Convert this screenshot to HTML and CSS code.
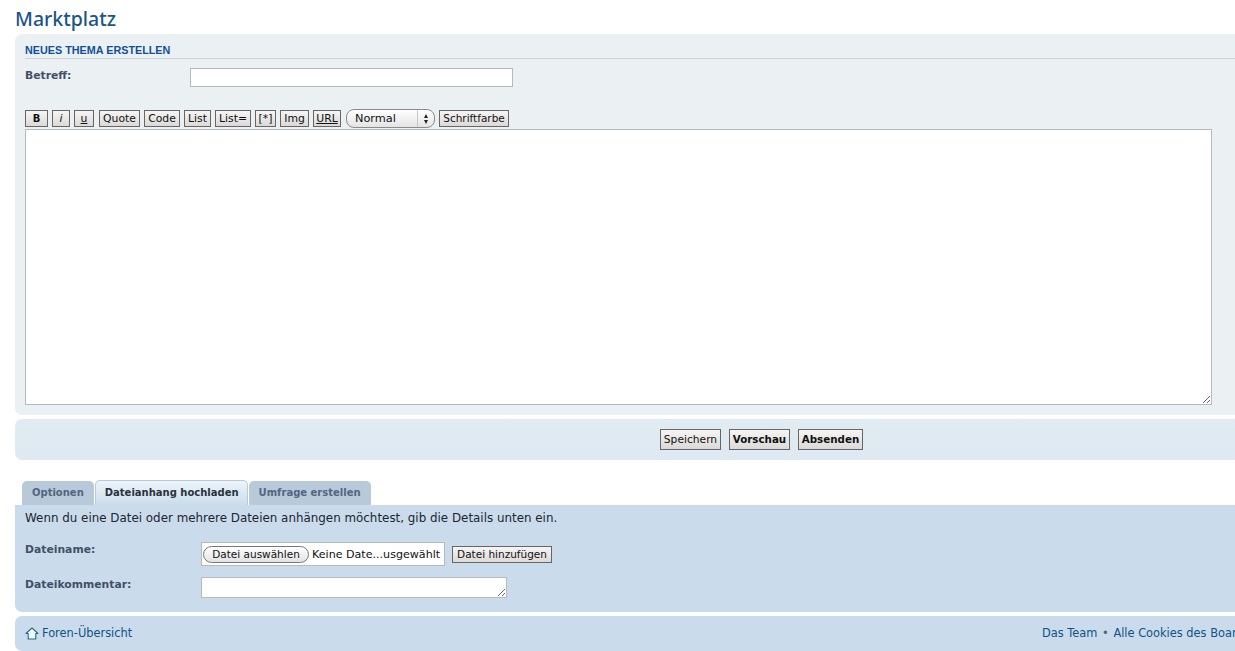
FILE: index.html
```html
<!DOCTYPE html>
<html lang="de">
<head>
<meta charset="utf-8">
<title>Marktplatz</title>
<link rel="stylesheet" href="styles.css">
</head>
<body>
<div class="wrap">
  <h2 class="title">Marktplatz</h2>
  <section class="panel post">
    <h3 class="heading">NEUES THEMA ERSTELLEN</h3>
    <div class="subject-row">
      <label class="label subject-label">Betreff:</label>
      <input class="field subject" type="text">
    </div>
    <div class="toolbar">
      <button class="btn w-b bold-b">B</button>
      <button class="btn w-i ital">i</button>
      <button class="btn w-u und">u</button>
      <button class="btn w-quote">Quote</button>
      <button class="btn w-code">Code</button>
      <button class="btn w-list">List</button>
      <button class="btn w-listeq">List=</button>
      <button class="btn w-star">[*]</button>
      <button class="btn w-img">Img</button>
      <button class="btn w-url und">URL</button>
      <div class="select"><span>Normal</span><span class="arrows"><i class="up"></i><i class="down"></i></span></div>
      <button class="btn colour">Schriftfarbe</button>
    </div>
    <textarea class="field editor"></textarea>
  </section>
  <section class="panel actions">
    <button class="btn big">Speichern</button>
    <button class="btn big strong">Vorschau</button>
    <button class="btn big strong">Absenden</button>
  </section>
  <nav class="tabs">
    <span class="tab">Optionen</span>
    <span class="tab active">Dateianhang hochladen</span>
    <span class="tab">Umfrage erstellen</span>
  </nav>
  <section class="panel attach">
    <p class="intro">Wenn du eine Datei oder mehrere Dateien anhängen möchtest, gib die Details unten ein.</p>
    <div class="attach-row">
      <label class="label attach-label">Dateiname:</label>
      <div class="file">
        <span class="file-btn">Datei auswählen</span>
        <span class="file-text">Keine Date...usgewählt</span>
      </div>
      <button class="btn add">Datei hinzufügen</button>
    </div>
    <div class="attach-row comment-row">
      <label class="label attach-label">Dateikommentar:</label>
      <textarea class="field comment"></textarea>
    </div>
  </section>
  <footer class="panel foot">
    <a class="home">
      <svg class="home-icon" viewBox="0 0 14 13" width="14" height="13"><path d="M7 1 L13 6.5 H10.8 V12 H3.2 V6.5 H1 Z" fill="#f4f8fb" stroke="#1a6f8c" stroke-width="1.1" stroke-linejoin="round"/></svg>
      Foren-Übersicht
    </a>
    <span class="foot-right">Das Team <b class="dot">•</b> Alle Cookies des Boards löschen</span>
  </footer>
</div>
</body>
</html>
```

FILE: styles.css
```css
html, body { margin: 0; padding: 0; background: #fff; overflow: hidden; width: 1235px; height: 651px; }
body { font-family: "DejaVu Sans", Verdana, sans-serif; color: #28313f; }
.wrap { width: 1300px; margin-left: 15px; }
.title { margin: 0; height: 34px; padding-top: 7px; box-sizing: border-box; font: 500 19.5px/24px "Noto Sans", "Open Sans", sans-serif; color: #1b5586; }
.panel { border-radius: 7px 0 0 7px; box-sizing: border-box; }
.post { height: 381px; background: #ebf0f3; padding: 10px 0 0 10px; }
.heading { margin: 0; height: 15px; font: 700 10.8px/12px "Liberation Sans", Arial, sans-serif; color: #115098; border-bottom: 1px solid #ccd2d6; box-sizing: border-box; }
.subject-row { display: flex; height: 42px; padding-top: 9px; box-sizing: border-box; }
.label { font-size: 10.8px; font-weight: 700; color: #425067; line-height: 15px; }
.subject-label { width: 165px; }
.field { background: #fff; border: 1px solid #b4bac0; box-sizing: border-box; margin: 0; display: block; border-radius: 0; outline: 0; }
.subject { width: 323px; height: 19px; }
.toolbar { display: flex; align-items: center; height: 19px; margin-top: 8px; gap: 4px; }
.btn { font: 400 10.8px/13px "DejaVu Sans", Verdana, sans-serif; color: #111; height: 17px; padding: 0; margin: 0; box-sizing: border-box; border: 1px solid #666; border-radius: 0; background: linear-gradient(#f6f5f4, #dcdad8); white-space: nowrap; }
.w-b { width: 23px; }
.w-i { width: 18px; }
.w-u { width: 20px; margin-right: 1px; }
.w-quote { width: 41px; }
.w-code { width: 36px; }
.w-list { width: 27px; }
.w-listeq { width: 36px; }
.w-star { width: 21px; }
.w-img { width: 29px; }
.w-url { width: 28px; }
.bold-b { font-weight: 700; font-size: 10px; }
.ital { font-style: italic; }
.und { text-decoration: underline; }
.colour { width: 70px; font-size: 10.5px; }
.select { width: 89px; height: 19px; margin-left: 1px; box-sizing: border-box; border: 1px solid #8b8b8b; border-radius: 8px; background: linear-gradient(#fff, #e4e4e4); display: flex; justify-content: space-between; align-items: center; padding-left: 8px; font-size: 11.3px; color: #111; }
.arrows { width: 16px; height: 100%; border-left: 1px solid #c8c8c8; display: flex; flex-direction: column; align-items: center; justify-content: center; gap: 2px; }
.up, .down { width: 0; height: 0; border-left: 2.5px solid transparent; border-right: 2.5px solid transparent; }
.up { border-bottom: 4px solid #222; }
.down { border-top: 4px solid #222; }
.editor { width: 1187px; height: 276px; margin-top: 1px; resize: both; }
.actions { height: 41px; margin-top: 4px; background: linear-gradient(#e1ebf2, #dfe9f1); display: flex; align-items: center; gap: 8px; padding: 0 0 0 645px; }
.big { height: 21px; font-size: 10.7px; width: 61px; }
.strong { font-weight: 700; font-size: 10.3px; }
.strong:last-child { width: 65px; }
.tabs { display: flex; align-items: flex-end; height: 45px; padding-left: 7px; gap: 1px; }
.tab { height: 24px; box-sizing: border-box; padding: 0 10px; background: #b8cad9; border-radius: 5px 5px 0 0; font-size: 10px; font-weight: 700; line-height: 23px; color: #536482; }
.active { height: 25px; padding: 0 8px 0 9px; background: linear-gradient(#eef5fa, #cadceb); border: 1px solid #b5cadb; border-bottom: 0; color: #28313f; line-height: 24px; }
.attach { height: 107px; background: #cadceb; padding: 5px 0 0 10px; border-top-left-radius: 0; }
.intro { margin: 0; font-size: 11.9px; line-height: 16px; color: #1c2530; }
.attach-row { display: flex; align-items: flex-start; }
.intro + .attach-row { margin-top: 16px; }
.attach-label { width: 176px; line-height: 15px; }
.file { width: 244px; height: 24px; box-sizing: border-box; background: #fff; border: 1px solid #b4bac0; display: flex; align-items: center; padding-left: 1px; font-size: 10.5px; color: #111; }
.file-btn { height: 17px; line-height: 15px; box-sizing: border-box; padding: 0 7px; border: 1px solid #777; border-radius: 9px; background: linear-gradient(#fff, #e2e2e2); width: 106px; white-space: nowrap; text-align: center; }
.file-text { margin-left: 3px; white-space: nowrap; font-size: 11.1px; }
.add { margin: 4px 0 0 7px; width: 100px; font-size: 10.5px; }
.comment-row { margin-top: 11px; }
.comment { width: 306px; height: 21px; resize: both; }
.foot { height: 35px; margin-top: 4px; background: #cadceb; display: flex; align-items: center; font-size: 11.4px; color: #105289; padding: 0 0 1px 10px; }
.home { width: 1017px; display: flex; align-items: center; gap: 3px; }
.foot-right { white-space: nowrap; }
.dot { color: #536482; font-weight: 400; margin: 0 1px; }
```
